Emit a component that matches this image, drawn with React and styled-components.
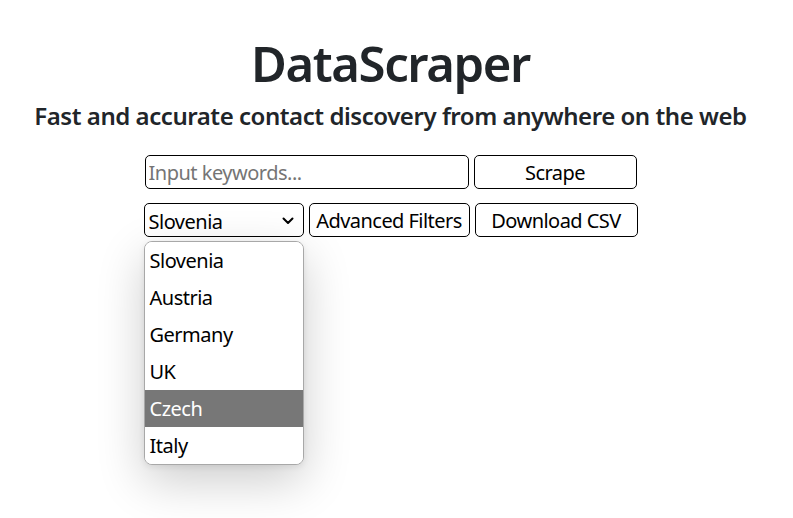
import React from "react";
import styled, { createGlobalStyle } from "styled-components";

const GlobalStyle = createGlobalStyle`
  html, body, #root {
    height: 100%;
  }
  body {
    margin: 0;
    background: #fff;
    font-family: "Noto Sans", "Open Sans", sans-serif;
    color: #212529;
  }
`;

const countries = ["Slovenia", "Austria", "Germany", "UK", "Czech", "Italy"];

const App = () => {
  return (
    <Page>
      <GlobalStyle />
      <Title>DataScraper</Title>
      <Subtitle>Fast and accurate contact discovery from anywhere on the web</Subtitle>
      <Row>
        <KeywordInput placeholder="Input keywords..." />
        <Btn $w={163}>Scrape</Btn>
      </Row>
      <Row>
        <SelectWrap>
          <SelectBox>
            <span>Slovenia</span>
            <svg width="12" height="8" viewBox="0 0 12 8">
              <path d="M1.5 1.5 L6 6 L10.5 1.5" fill="none" stroke="#000" strokeWidth="2" strokeLinecap="round" strokeLinejoin="round" />
            </svg>
          </SelectBox>
          <Menu>
            {countries.map((c) => (
              <Option key={c} $active={c === "Czech"}>
                {c}
              </Option>
            ))}
          </Menu>
        </SelectWrap>
        <Btn $w={161}>Advanced Filters</Btn>
        <Btn $w={163}>Download CSV</Btn>
      </Row>
    </Page>
  );
};

export default App;

const Page = styled.div`
  width: 781px;
  min-height: 100%;
  box-sizing: border-box;
  display: flex;
  flex-direction: column;
  align-items: center;
  padding-top: 30px;
`;

const Title = styled.h1`
  margin: 0;
  font-size: 49px;
  font-weight: 600;
  letter-spacing: -1.4px;
  line-height: 66px;
  color: #212529;
`;

const Subtitle = styled.h3`
  margin: 2px 0 21px;
  font-size: 24px;
  font-weight: 600;
  letter-spacing: -0.45px;
  line-height: 36px;
  color: #212529;
`;

const Row = styled.div`
  display: flex;
  gap: 5px;
  margin-bottom: 14px;
`;

const KeywordInput = styled.input`
  box-sizing: border-box;
  width: 324px;
  height: 34px;
  border: 1px solid #000;
  border-radius: 5px;
  padding: 0 3px;
  font-family: inherit;
  font-size: 20px;
  letter-spacing: -0.5px;
  color: #000;
  outline: none;

  &::placeholder {
    color: #757575;
  }
`;

const Btn = styled.button`
  box-sizing: border-box;
  width: ${(p) => p.$w}px;
  height: 34px;
  background: #fff;
  border: 1px solid #000;
  border-radius: 5px;
  font-family: inherit;
  font-size: 20px;
  letter-spacing: -0.55px;
  color: #000;
  padding: 0;
  white-space: nowrap;
`;

const SelectWrap = styled.div`
  position: relative;
`;

const SelectBox = styled.div`
  box-sizing: border-box;
  width: 160px;
  height: 34px;
  border: 1px solid #000;
  border-radius: 5px;
  display: flex;
  align-items: center;
  justify-content: space-between;
  padding: 2px 9px 0 4px;
  font-size: 20px;
  letter-spacing: -0.5px;
  color: #000;
`;

const Menu = styled.div`
  position: absolute;
  top: 38px;
  left: 0;
  width: 160px;
  box-sizing: border-box;
  border: 1px solid #a8a8a8;
  border-radius: 8px;
  background: #fff;
  overflow: hidden;
  box-shadow: 0 16px 48px rgba(0, 0, 0, 0.2), 0 2px 6px rgba(0, 0, 0, 0.08);
  z-index: 10;
`;

const Option = styled.div`
  height: 37px;
  line-height: 37px;
  padding-left: 5px;
  font-size: 20px;
  letter-spacing: -0.5px;
  color: ${(p) => (p.$active ? "#fff" : "#000")};
  background: ${(p) => (p.$active ? "#777777" : "#fff")};
`;
